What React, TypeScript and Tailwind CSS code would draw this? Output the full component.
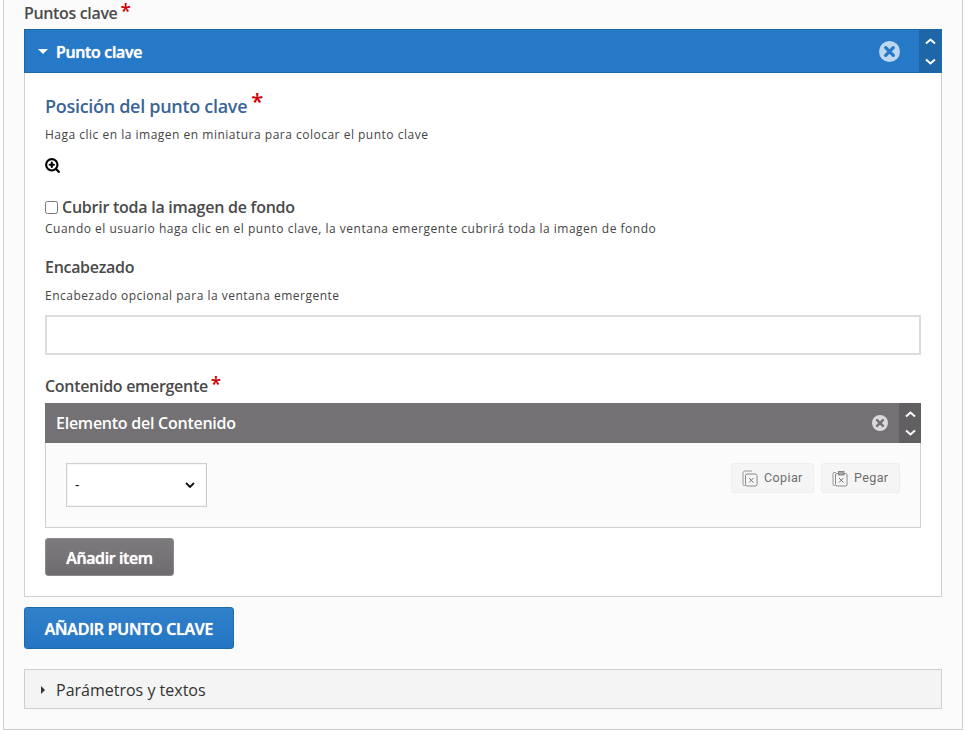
import { ZoomIn } from 'lucide-react'

function Star({ className }: { className: string }) {
  return <span className={`font-['Open_Sans',sans-serif] text-[#d00000] font-semibold leading-[12px] ${className}`}>*</span>
}

function CloseCircle({ size, fill, cross }: { size: number; fill: string; cross: string }) {
  return (
    <svg width={size} height={size} viewBox="0 0 22 22">
      <circle cx="11" cy="11" r="11" fill={fill} />
      <path d="M7 7l8 8M15 7l-8 8" stroke={cross} strokeWidth="3.4" strokeLinecap="round" />
    </svg>
  )
}

function Arrows({ bg, gap }: { bg: string; gap: string }) {
  return (
    <div className={`w-[22px] h-full flex flex-col items-center justify-center ${gap} ${bg}`}>
      <svg width="11" height="7" viewBox="0 0 11 7">
        <path d="M1 5.5l4.500-4 4.500 4" fill="none" stroke="white" strokeWidth="2" />
      </svg>
      <svg width="11" height="7" viewBox="0 0 11 7">
        <path d="M1 1.500l4.500 4 4.500-4" fill="none" stroke="white" strokeWidth="2" />
      </svg>
    </div>
  )
}

function CopyIcon() {
  return (
    <svg width="16" height="17" viewBox="0 0 16 17" fill="none">
      <path d="M3 15.5H2a1 1 0 0 1-1-1V3a2 2 0 0 1 2-2h7" stroke="#999" strokeWidth="1" />
      <rect x="3.5" y="4" width="11.5" height="12" rx="1.5" stroke="#8a8a8a" strokeWidth="1" />
      <path d="M7 8l4.5 4.5M11.5 8L7 12.5" stroke="#777" strokeWidth="1" />
    </svg>
  )
}

function PasteIcon() {
  return (
    <svg width="16" height="17" viewBox="0 0 16 17" fill="none">
      <path d="M3 15.5H2a1 1 0 0 1-1-1V3.500a1 1 0 0 1 1-1h2" stroke="#999" strokeWidth="1" />
      <rect x="3.500" y="3.500" width="11.500" height="12.500" rx="1.500" stroke="#8a8a8a" strokeWidth="1" />
      <rect x="6.500" y="1.500" width="5.500" height="3.500" fill="#aaa" stroke="#777" strokeWidth="0.800" />
      <path d="M7 8l4.500 4.500M11.500 8L7 12.500" stroke="#777" strokeWidth="1" />
    </svg>
  )
}

export default function App() {
  return (
    <div className="bg-white h-[731px] font-['Open_Sans',sans-serif] overflow-hidden">
      <div className="ml-[3px] w-[960px] h-[730px] bg-[#fbfbfb] border-x border-b border-[#cfcfcf] px-5">
        <div className="h-[29px] flex items-center text-[16px] font-semibold tracking-[-0.35px] text-[#4a4a4a] leading-none pb-[3px]">
          Puntos clave
          <Star className="text-[19px] ml-[3px] -mt-[5px]" />
        </div>

        <div className="h-[44px] bg-[#2579c6] border border-[#1f66a8] flex items-center text-white">
          <span className="ml-[13px] w-0 h-0 border-x-[5px] border-x-transparent border-t-[5px] border-t-white" />
          <span className="ml-[8px] pt-[2px] text-[16px] font-semibold tracking-[-0.35px] [text-shadow:0_0_1px_#fff]">Punto clave</span>
          <span className="ml-auto mr-[19px] flex">
            <CloseCircle size={21} fill="#bcd7ef" cross="#2579c6" />
          </span>
          <Arrows bg="bg-[#1f66a8]" gap="gap-[13px]" />
        </div>

        <div className="h-[524px] bg-white border-x border-b border-[#cfcfcf] px-5">
          <div className="h-[45px] pt-[20px] flex items-center text-[18px] font-semibold tracking-[-0.3px] text-[#3a6595] leading-none">
            Posición del punto clave
            <Star className="text-[22px] ml-[4px] -mt-[11px]" />
          </div>
          <p className="mt-[8px] text-[12px] leading-[18px] tracking-[0.5px] text-[#444]">
            Haga clic en la imagen en miniatura para colocar el punto clave
          </p>
          <div className="mt-[12px] h-[18px] flex items-center">
            <ZoomIn size={17} strokeWidth={3} className="text-black -ml-[1px]" />
          </div>
          <label className="mt-[23px] h-[20px] flex items-center text-[16px] font-semibold tracking-[-0.25px] text-[#4a4a4a] leading-none">
            <input type="checkbox" className="w-[13px] h-[13px] mr-[4px]" />
            Cubrir toda la imagen de fondo
          </label>
          <p className="mt-[3px] text-[12px] leading-[18px] tracking-[0.5px] text-[#444]">
            Cuando el usuario haga clic en el punto clave, la ventana emergente cubrirá toda la imagen de fondo
          </p>
          <div className="mt-[19px] h-[20px] flex items-center text-[16px] font-semibold tracking-[-0.3px] text-[#4a4a4a] leading-none">
            Encabezado
          </div>
          <p className="mt-[10px] text-[12px] leading-[18px] tracking-[0.5px] text-[#444]">
            Encabezado opcional para la ventana emergente
          </p>
          <input
            type="text"
            className="mt-[10px] block w-full h-[40px] bg-white border-2 border-[#dcdcdc] outline-none"
          />
          <div className="mt-[21px] h-[20px] flex items-center text-[16px] font-semibold tracking-[-0.3px] text-[#4a4a4a] leading-none">
            Contenido emergente
            <Star className="text-[19px] ml-[3px] -mt-[4px]" />
          </div>

          <div className="mt-[7px] h-[40px] bg-[#747174] flex items-center text-white">
            <span className="ml-[11px] text-[16px] font-semibold tracking-[-0.25px]">Elemento del Contenido</span>
            <span className="ml-auto mr-[11px] flex">
              <CloseCircle size={16} fill="#d9d9d9" cross="#747174" />
            </span>
            <Arrows bg="bg-[#625f62]" gap="gap-[11px]" />
          </div>
          <div className="h-[85px] bg-[#fbfbfb] border-x border-b border-[#d0d0d0] pl-5 pr-5 pt-5 flex items-start justify-between">
            <div className="w-[141px] h-[44px] bg-white border border-[#cfcfcf] [box-shadow:inset_0_0_2px_#ddd] flex items-center justify-between pl-[8px] pr-[11px]">
              <span className="text-[13px] text-black font-['Liberation_Sans',sans-serif]">-</span>
              <svg width="10" height="7" viewBox="0 0 10 7">
                <path d="M1 1l4 4 4-4" fill="none" stroke="#111" strokeWidth="1.800" />
              </svg>
            </div>
            <div className="flex gap-[7px]">
              <button className="w-[83px] h-[30px] bg-[#f5f5f5] border border-[#eeeeee] rounded-[3px] flex items-center pl-[10px] gap-[6px] text-[12.5px] text-[#6d6d6d] tracking-[0.4px] font-['Roboto',sans-serif]">
                <CopyIcon />
                Copiar
              </button>
              <button className="w-[79px] h-[30px] bg-[#f5f5f5] border border-[#eeeeee] rounded-[3px] flex items-center pl-[10px] gap-[6px] text-[12.5px] text-[#6d6d6d] tracking-[0.4px] font-['Roboto',sans-serif]">
                <PasteIcon />
                Pegar
              </button>
            </div>
          </div>
          <button className="mt-[10px] block w-[129px] h-[38px] pt-[2px] rounded-[3px] bg-gradient-to-b from-[#7d7a7d] to-[#6f6c6f] border border-[#8c8a8c] text-white text-[16px] font-semibold tracking-[-0.4px] [text-shadow:0_0_1px_#fff]">
            Añadir item
          </button>
        </div>

        <button className="mt-[10px] block w-[210px] h-[42px] pt-[2px] rounded-[3px] bg-gradient-to-b from-[#3080ca] to-[#2476c4] border border-[#2169ad] text-white text-[16px] font-semibold tracking-[-0.25px] [text-shadow:0_0_1px_#fff]">
          AÑADIR PUNTO CLAVE
        </button>

        <div className="mt-[20px] h-[40px] pt-[1px] bg-[#f4f4f4] border border-[#cfcfcf] flex items-center text-[16px] text-[#333]">
          <span className="ml-[16px] w-0 h-0 border-y-[4px] border-y-transparent border-l-[4px] border-l-[#333]" />
          <span className="ml-[11px]">Parámetros y textos</span>
        </div>
      </div>
    </div>
  )
}
